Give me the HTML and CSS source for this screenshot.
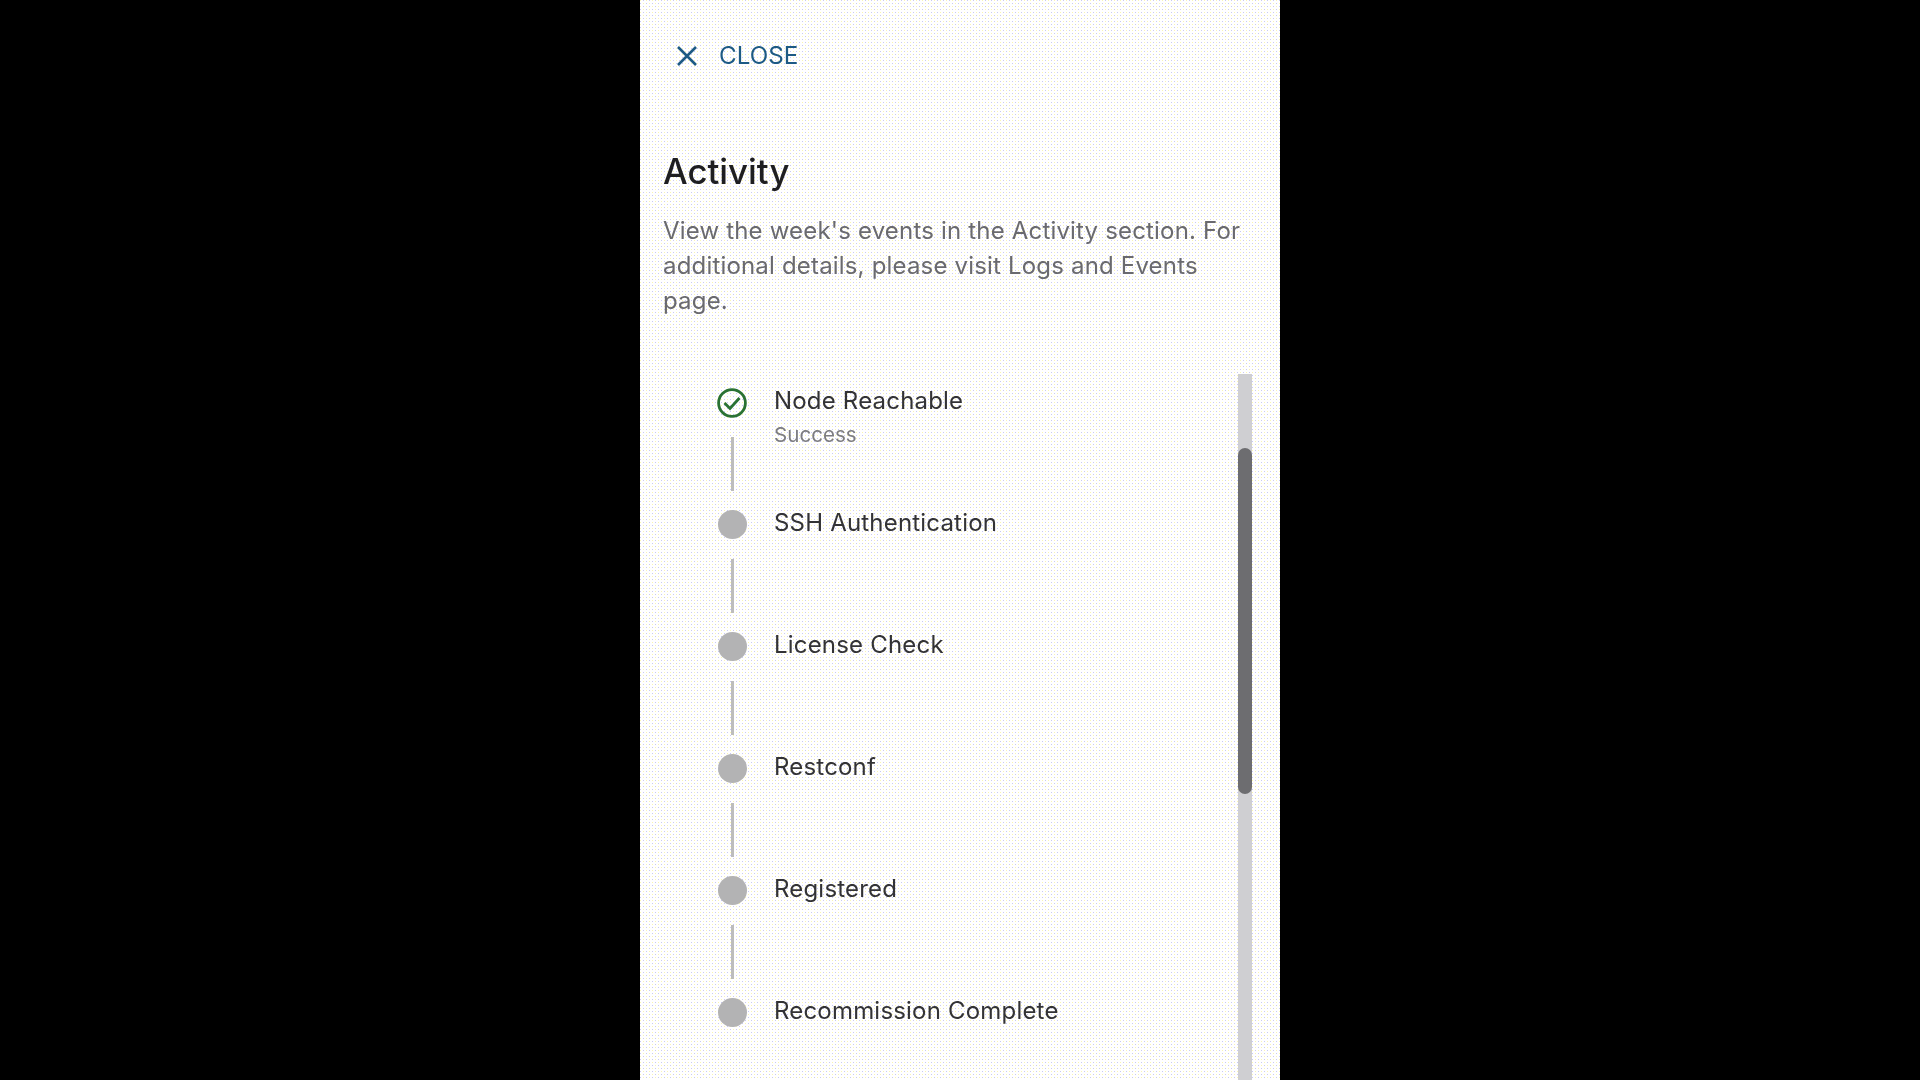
FILE: index.html
```html
<!DOCTYPE html>
<html lang="en">
<head>
<meta charset="utf-8">
<title>Activity</title>
<link rel="stylesheet" href="styles.css">
</head>
<body>
<aside class="panel">
  <div class="content">
    <button class="close" type="button">
      <svg class="close-icon" viewBox="0 0 20 20" aria-hidden="true"><path d="M1 1 19 19M19 1 1 19"/></svg>
      <span>CLOSE</span>
    </button>
    <h1 class="title">Activity</h1>
    <p class="desc">View the week's events in the Activity section. For additional details, please visit Logs and Events page.</p>
    <div class="scroller">
      <ol class="steps">
        <li class="step">
          <div class="rail">
            <svg class="ok" viewBox="0 0 30 30" aria-hidden="true"><circle cx="15" cy="15" r="13.4"/><path d="M7.5 15 13 20.5 22.5 10"/></svg>
            <span class="line"></span>
          </div>
          <div class="body"><div class="name">Node Reachable</div><div class="sub">Success</div></div>
        </li>
        <li class="step">
          <div class="rail"><span class="dot"></span><span class="line"></span></div>
          <div class="body"><div class="name">SSH Authentication</div></div>
        </li>
        <li class="step">
          <div class="rail"><span class="dot"></span><span class="line"></span></div>
          <div class="body"><div class="name">License Check</div></div>
        </li>
        <li class="step">
          <div class="rail"><span class="dot"></span><span class="line"></span></div>
          <div class="body"><div class="name">Restconf</div></div>
        </li>
        <li class="step">
          <div class="rail"><span class="dot"></span><span class="line"></span></div>
          <div class="body"><div class="name">Registered</div></div>
        </li>
        <li class="step">
          <div class="rail"><span class="dot"></span></div>
          <div class="body"><div class="name">Recommission Complete</div></div>
        </li>
      </ol>
      <div class="track"><div class="thumb"></div></div>
    </div>
  </div>
</aside>
</body>
</html>
```
FILE: styles.css
```css
* { box-sizing: border-box; }
html, body { height: 100%; }
body {
  margin: 0;
  background: #000;
  display: flex;
  justify-content: center;
  overflow: hidden;
  font-family: Inter, "Liberation Sans", sans-serif;
}
.panel {
  width: 640px;
  height: 1080px;
  background-color: #ffffff;
  background-image:
    radial-gradient(circle at 0.5px 0.5px, #fbf6b0 0.7px, transparent 0.7px),
    radial-gradient(circle at 0.5px 3.5px, #c8c8f4 0.7px, transparent 0.7px),
    radial-gradient(circle at 3.5px 3.5px, #fbf6b0 0.7px, transparent 0.7px),
    radial-gradient(circle at 3.5px 0.5px, #c8c8f4 0.7px, transparent 0.7px);
  background-size: 6px 6px;
  overflow: hidden;
}
.content {
  height: 100%;
  display: flex;
  flex-direction: column;
  padding: 0 24px 0 23px;
  filter: blur(0.35px);
}
.close {
  display: flex;
  align-items: center;
  gap: 22px;
  background: none;
  border: 0;
  padding: 0 0 0 14px;
  margin-top: 44px;
  height: 24px;
  color: #1d5a84;
  font: 400 24.2px/24px Inter, "Liberation Sans", sans-serif;
  align-self: flex-start;
}
.close-icon { width: 20px; height: 20px; flex: none; }
.close-icon path { fill: none; stroke: #1d5a84; stroke-width: 2.6; }
.title {
  margin: 80px 0 0;
  font-size: 34.8px;
  line-height: 46px;
  font-weight: 500;
  color: #1f1f21;
}
.desc {
  margin: 19px 0 0;
  font-size: 24px;
  letter-spacing: 0.18px;
  line-height: 35px;
  color: #6a6a6f;
}
.scroller {
  margin-top: 56px;
  display: flex;
  justify-content: space-between;
  flex: 1;
  min-height: 0;
  margin-right: 4px;
}
.steps {
  list-style: none;
  margin: 0;
  padding: 14px 0 0 54px;
}
.step { display: flex; height: 122px; }
.rail {
  width: 30px;
  display: flex;
  flex-direction: column;
  align-items: center;
  flex: none;
}
.ok { width: 30px; height: 30px; flex: none; }
.ok circle { fill: none; stroke: #2a7233; stroke-width: 2.8; }
.ok path { fill: none; stroke: #2a7233; stroke-width: 2.8; }
.dot { width: 29px; height: 29px; border-radius: 50%; background: #b3b3b4; flex: none; }
.line { width: 3px; height: 54px; margin-top: 19px; background: #bdbdbc; flex: none; }
.dot + .line { margin-top: 20px; }
.body { margin-left: 27px; }
.name { font-size: 24px; letter-spacing: 0.19px; line-height: 30px; color: #333336; margin-top: -2px; }
.sub { font-size: 20.6px; line-height: 26px; margin-top: 6px; color: #7d7d82; }
.track {
  width: 14px;
  height: 100%;
  background: #cfcfd2;
  flex: none;
}
.thumb {
  width: 14px;
  height: 346px;
  margin-top: 74px;
  background: #6d6d70;
  border-radius: 7px;
}
```
